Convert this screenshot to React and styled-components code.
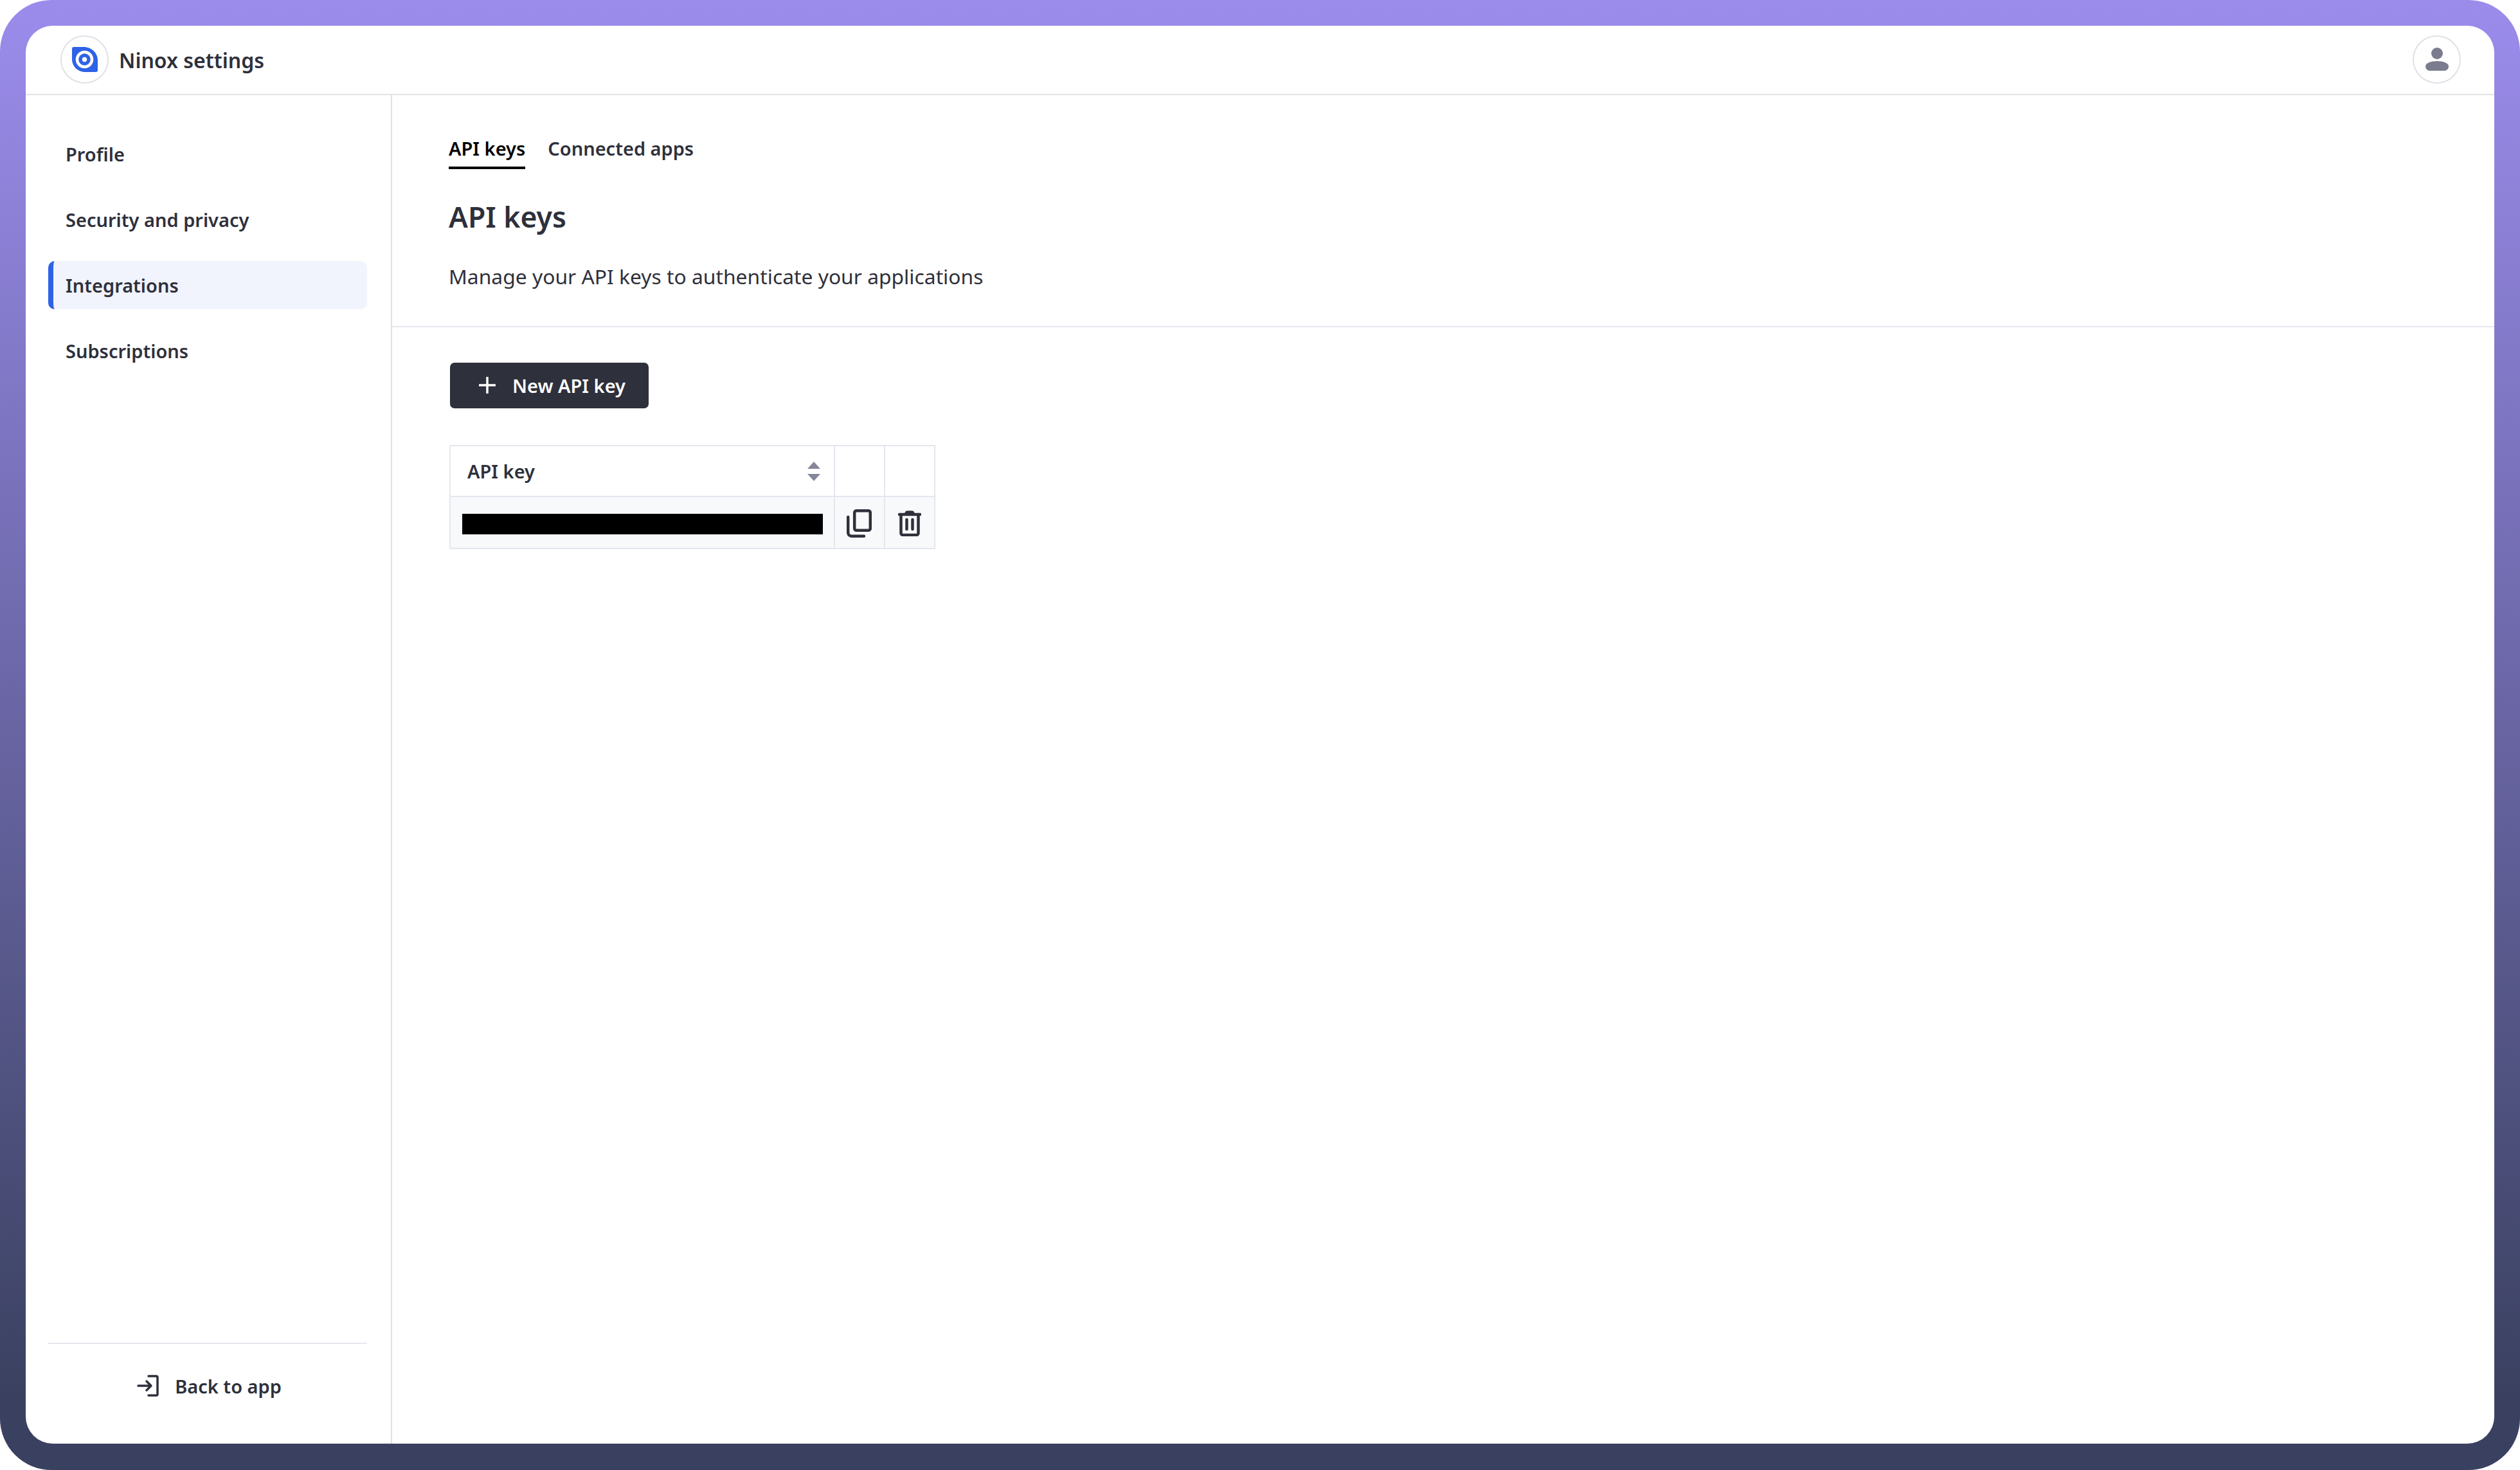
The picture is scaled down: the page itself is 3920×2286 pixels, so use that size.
import React from "react";
import styled, { createGlobalStyle } from "styled-components";

const GlobalStyle = createGlobalStyle`
  html, body {
    margin: 0;
    padding: 0;
    background: #fff;
  }
  * {
    box-sizing: border-box;
  }
`;

const Frame = styled.div`
  width: 3920px;
  height: 2286px;
  padding: 40px 40px 41px;
  border-radius: 80px;
  background: linear-gradient(180deg, #9b8cec 0%, #3a4160 95%);
  font-family: "Noto Sans", sans-serif;
  color: #2e303b;
`;

const Panel = styled.div`
  height: 100%;
  display: flex;
  flex-direction: column;
  background: #fff;
  border-radius: 42px;
  overflow: hidden;
`;

const Header = styled.header`
  height: 108px;
  flex: none;
  display: flex;
  align-items: center;
  justify-content: space-between;
  padding: 0 52px 2px 54px;
  border-bottom: 2.5px solid #e2e2e9;
`;

const Brand = styled.div`
  display: flex;
  align-items: center;
  gap: 16px;
  font-size: 32px;
  font-weight: 600;
`;

const BrandName = styled.span`
  position: relative;
  top: 1px;
`;

const RoundBadge = styled.div`
  width: 75px;
  height: 75px;
  border-radius: 50%;
  border: 2.5px solid #e0e0e7;
  display: flex;
  align-items: center;
  justify-content: center;
`;

const Body = styled.div`
  flex: 1;
  min-height: 0;
  display: flex;
`;

const Sidebar = styled.aside`
  width: 570px;
  flex: none;
  display: flex;
  flex-direction: column;
  padding: 0 37px 0 35px;
  border-right: 2.5px solid #e0e0e7;
`;

const Nav = styled.nav`
  flex: 1;
  display: flex;
  flex-direction: column;
  gap: 27px;
  padding-top: 54px;
`;

const NavItem = styled.a`
  height: 75px;
  display: flex;
  align-items: center;
  padding-left: 19px;
  font-size: 29px;
  font-weight: 600;
  border-radius: 10px;
  border-left: 8px solid ${props => (props.$active ? "#2f62e6" : "transparent")};
  background: ${props => (props.$active ? "#f1f4fd" : "transparent")};
`;

const BackRow = styled.div`
  height: 157px;
  flex: none;
  display: flex;
  align-items: center;
  justify-content: center;
  gap: 25px;
  padding: 0 0 25px 5px;
  border-top: 2.5px solid #e6e6ee;
  font-size: 29px;
  font-weight: 600;
`;

const Main = styled.main`
  flex: 1;
  min-width: 0;
`;

const Intro = styled.section`
  height: 361px;
  padding: 48px 88px 0;
  border-bottom: 2.5px solid #e6e6ee;
`;

const Tabs = styled.div`
  display: flex;
  gap: 35px;
`;

const Tab = styled.div`
  height: 67px;
  padding-top: 15px;
  font-size: 29px;
  font-weight: 600;
  color: ${props => (props.$active ? "#000" : "#2e303b")};
  border-bottom: 4px solid ${props => (props.$active ? "#000" : "transparent")};
`;

const Title = styled.h1`
  margin: 43px 0 0;
  font-size: 44.5px;
  line-height: 61px;
  font-weight: 600;
`;

const Description = styled.p`
  margin: 41px 0 0;
  font-size: 31.8px;
  line-height: 44px;
  font-weight: 400;
`;

const Content = styled.section`
  padding: 55px 89px 0;
`;

const NewButton = styled.button`
  width: 309px;
  height: 71px;
  margin-left: 1px;
  display: flex;
  align-items: center;
  gap: 26px;
  padding: 0 0 1px 45px;
  border: 0;
  border-radius: 7px;
  background: #2e303b;
  color: #fff;
  font-family: inherit;
  font-size: 29px;
  font-weight: 600;
`;

const Table = styled.div`
  width: 756px;
  margin-top: 57px;
  display: grid;
  grid-template-columns: 600px 78px 78px;
  grid-template-rows: 81px 81px;
`;

const Cell = styled.div`
  display: flex;
  align-items: center;
  justify-content: center;
  background: ${props => (props.$shaded ? "#f8f9fb" : "#fff")};
  border: 2.5px solid #e6e6ee;
  border-left-width: ${props => (props.$first ? "2.5px" : 0)};
  border-top-width: ${props => (props.$shaded ? 0 : "2.5px")};
  padding-top: ${props => (props.$shaded ? "2px" : 0)};
`;

const HeaderCell = styled(Cell)`
  justify-content: space-between;
  padding: 0 21px 0 26px;
  font-size: 29px;
  font-weight: 600;
`;

const KeyCell = styled(Cell)`
  padding: 4px 17px 0 18px;
`;

const CopyCell = styled(Cell)`
  padding-right: 2px;
`;

const Redacted = styled.div`
  width: 100%;
  height: 32px;
  background: #000;
`;

const NinoxLogo = () => (
  <svg width="40" height="39" viewBox="0 0 40 39">
    <path
      d="M0 3a3 3 0 0 1 3-3h15c12 0 22 9 22 21v15a3 3 0 0 1-3 3H20C9 39 0 30 0 19z"
      fill="#2f62e6"
    />
    <circle cx="19.5" cy="19.5" r="11.5" fill="none" stroke="#fff" strokeWidth="4.5" />
    <circle cx="19.5" cy="19.5" r="3.7" fill="#fff" />
  </svg>
);

const UserIcon = () => (
  <svg width="36" height="36" viewBox="0 0 36 36" fill="#7b7d8e">
    <circle cx="18" cy="9" r="9" />
    <path d="M0 29.5C0 24 8 21 18 21s18 3 18 8.5a6.5 6.5 0 0 1-6.5 6.5h-23A6.5 6.5 0 0 1 0 29.5z" />
  </svg>
);

const BackIcon = () => (
  <svg width="34" height="34" viewBox="0 0 34 34" fill="none" stroke="#2e303b" strokeWidth="3.5" strokeLinecap="round" strokeLinejoin="round">
    <path d="M18 2h12a2 2 0 0 1 2 2v26a2 2 0 0 1-2 2H18" />
    <path d="M2 17h20M15 10l7 7-7 7" />
  </svg>
);

const PlusIcon = () => (
  <svg width="26" height="26" viewBox="0 0 26 26" stroke="#fff" strokeWidth="3.5" strokeLinecap="round">
    <path d="M13 1v24M1 13h24" />
  </svg>
);

const SortIcon = () => (
  <svg width="20" height="30" viewBox="0 0 20 30" fill="#858699">
    <path d="M10 0l10 11H0z" />
    <path d="M0 19h20L10 30z" />
  </svg>
);

const CopyIcon = () => (
  <svg width="39" height="44" viewBox="0 0 39 44" fill="none" stroke="#2e303b" strokeWidth="4.5" strokeLinecap="round" strokeLinejoin="round">
    <rect x="12.2" y="2.2" width="24.6" height="30.6" rx="3" />
    <path d="M2.2 12v24a5.8 5.8 0 0 0 5.8 5.8h19" />
  </svg>
);

const TrashIcon = () => (
  <svg width="36" height="40" viewBox="0 0 36 40" fill="none" stroke="#2e303b" strokeWidth="4.5" strokeLinecap="round" strokeLinejoin="round">
    <path d="M2 6h32M12.5 4.5a2 2 0 0 1 2-2h7a2 2 0 0 1 2 2" />
    <path d="M4.5 6v29a3 3 0 0 0 3 3h21a3 3 0 0 0 3-3V6" />
    <path d="M13.5 14v15M22.5 14v15" />
  </svg>
);

const navItems = ["Profile", "Security and privacy", "Integrations", "Subscriptions"];

const App = () => (
  <>
    <GlobalStyle />
    <Frame>
      <Panel>
        <Header>
          <Brand>
            <RoundBadge>
              <NinoxLogo />
            </RoundBadge>
            <BrandName>Ninox settings</BrandName>
          </Brand>
          <RoundBadge>
            <UserIcon />
          </RoundBadge>
        </Header>
        <Body>
          <Sidebar>
            <Nav>
              {navItems.map(item => (
                <NavItem key={item} $active={item === "Integrations"}>
                  {item}
                </NavItem>
              ))}
            </Nav>
            <BackRow>
              <BackIcon />
              Back to app
            </BackRow>
          </Sidebar>
          <Main>
            <Intro>
              <Tabs>
                <Tab $active>API keys</Tab>
                <Tab>Connected apps</Tab>
              </Tabs>
              <Title>API keys</Title>
              <Description>Manage your API keys to authenticate your applications</Description>
            </Intro>
            <Content>
              <NewButton>
                <PlusIcon />
                New API key
              </NewButton>
              <Table>
                <HeaderCell $first>
                  API key
                  <SortIcon />
                </HeaderCell>
                <Cell />
                <Cell />
                <KeyCell $first $shaded>
                  <Redacted />
                </KeyCell>
                <CopyCell $shaded>
                  <CopyIcon />
                </CopyCell>
                <Cell $shaded>
                  <TrashIcon />
                </Cell>
              </Table>
            </Content>
          </Main>
        </Body>
      </Panel>
    </Frame>
  </>
);

export default App;
